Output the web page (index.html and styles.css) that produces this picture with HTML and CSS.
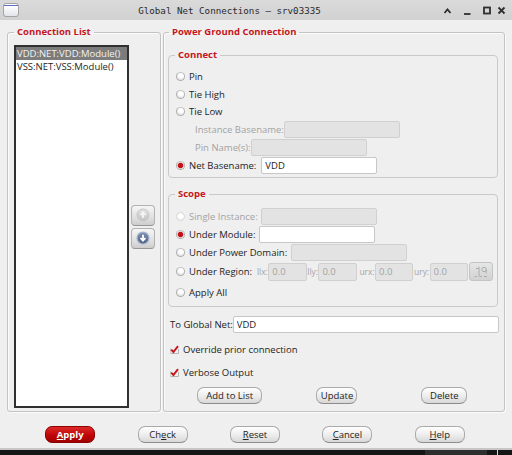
FILE: index.html
```html
<!DOCTYPE html>
<html>
<head>
<meta charset="utf-8">
<title>Global Net Connections</title>
<link rel="stylesheet" href="styles.css">
</head>
<body>
<div class="window">
  <header class="titlebar">
    <span class="winicon"></span>
    <span class="title">Global Net Connections – srv03335</span>
    <svg class="wm" width="70" height="20" viewBox="0 0 70 20">
      <path d="M4.5 13 L7.5 9.5 L10.5 13" fill="none" stroke="#2e2e2e" stroke-width="1.8"/>
      <path d="M24 14 H30.5" stroke="#2e2e2e" stroke-width="1.8"/>
      <rect x="44" y="7.5" width="6" height="6" fill="none" stroke="#2e2e2e" stroke-width="1.8"/>
      <path d="M58.5 7.5 L64.5 13.5 M64.5 7.5 L58.5 13.5" stroke="#2e2e2e" stroke-width="1.8"/>
    </svg>
  </header>

  <main class="content">
    <fieldset class="group left">
      <legend>Connection List</legend>
      <div class="leftbody">
        <ul class="listbox">
          <li class="sel">VDD:NET:VDD:Module()</li>
          <li>VSS:NET:VSS:Module()</li>
        </ul>
        <div class="arrows">
          <button class="arrow" type="button">
            <svg width="14" height="14" viewBox="0 0 14 14">
              <defs><linearGradient id="gu" x1="0" y1="0" x2="0" y2="1"><stop offset="0" stop-color="#e4e4e4"/><stop offset="1" stop-color="#c2c2c2"/></linearGradient></defs>
              <circle cx="7" cy="7" r="6" fill="url(#gu)" stroke="#c6c6c6"/>
              <path d="M7 10 V4.5 M4.5 7 L7 4.3 L9.5 7" fill="none" stroke="#f6f6f6" stroke-width="1.8"/>
            </svg>
          </button>
          <button class="arrow" type="button">
            <svg width="14" height="14" viewBox="0 0 14 14">
              <defs><linearGradient id="gd" x1="0" y1="0" x2="0" y2="1"><stop offset="0" stop-color="#8294b4"/><stop offset="1" stop-color="#4c5f82"/></linearGradient></defs>
              <circle cx="7" cy="7" r="6" fill="url(#gd)" stroke="#a9b6cc" stroke-width="1.2"/>
              <path d="M7 3.8 V9.3 M4.5 7 L7 9.7 L9.5 7" fill="none" stroke="#ffffff" stroke-width="1.8"/>
            </svg>
          </button>
        </div>
      </div>
    </fieldset>

    <fieldset class="group right">
      <legend>Power Ground Connection</legend>

      <fieldset class="sub connect">
        <legend>Connect</legend>
        <div class="row h18"><span class="radio"></span><span>Pin</span></div>
        <div class="row h18"><span class="radio"></span><span>Tie High</span></div>
        <div class="row h17"><span class="radio"></span><span>Tie Low</span></div>
        <div class="row h18 indent"><span class="dis">Instance Basename:</span><input class="field off" disabled value=""></div>
        <div class="row h18 indent"><span class="dis">Pin Name(s):</span><input class="field off" disabled value=""></div>
        <div class="row h19"><span class="radio on"></span><span class="lbl-net">Net Basename:</span><input class="field" value="VDD"></div>
      </fieldset>

      <fieldset class="sub scope">
        <legend>Scope</legend>
        <div class="row h18"><span class="radio off"></span><span class="dis lbl-single">Single Instance:</span><input class="field off" disabled value=""></div>
        <div class="row h18"><span class="radio on"></span><span class="lbl-mod">Under Module:</span><input class="field" value=""></div>
        <div class="row h18"><span class="radio"></span><span class="lbl-pd">Under Power Domain:</span><input class="field off" disabled value=""></div>
        <div class="row h21 region">
          <span class="radio"></span><span class="lbl-region">Under Region:</span>
          <span class="dis coord">llx:</span><input class="field off small" disabled value="0.0">
          <span class="dis coord">lly:</span><input class="field off small" disabled value="0.0">
          <span class="dis coord gap2">urx:</span><input class="field off small s38" disabled value="0.0">
          <span class="dis coord gap1">ury:</span><input class="field off small s38" disabled value="0.0">
          <button class="pick" type="button" disabled>
            <svg width="16" height="14" viewBox="0 0 16 14">
              <path d="M6 1.5 V11.5 M3 3.5 H6 M1.5 11.5 H4 M6.5 11.5 H9 M11 11.5 H14" fill="none" stroke="#a9b0b4" stroke-width="1"/>
              <circle cx="11" cy="4.5" r="2.2" fill="none" stroke="#a9b0b4" stroke-width="1"/>
              <path d="M13.2 4.5 V8.5" stroke="#a9b0b4" stroke-width="1"/>
            </svg>
          </button>
        </div>
        <div class="row h21"><span class="radio"></span><span>Apply All</span></div>
      </fieldset>

      <div class="row h17 globalnet"><span>To Global Net:</span><input class="field wide" value="VDD"></div>

      <div class="row h18 check first">
        <svg class="cb" width="9" height="9" viewBox="0 0 9 9">
          <path d="M0.5 8.5 H8.5 V4" fill="none" stroke="#b4b4b4"/>
          <path d="M0.5 8.5 V3" fill="none" stroke="#cfcfcf"/>
          <path d="M1.2 4.6 L3.4 7 L8 1.2" fill="none" stroke="#c8141a" stroke-width="1.9"/>
        </svg>
        <span>Override prior connection</span>
      </div>
      <div class="row h18 check second">
        <svg class="cb" width="9" height="9" viewBox="0 0 9 9">
          <path d="M0.5 8.5 H8.5 V4" fill="none" stroke="#b4b4b4"/>
          <path d="M0.5 8.5 V3" fill="none" stroke="#cfcfcf"/>
          <path d="M1.2 4.6 L3.4 7 L8 1.2" fill="none" stroke="#c8141a" stroke-width="1.9"/>
        </svg>
        <span>Verbose Output</span>
      </div>

      <div class="listbtns">
        <button class="btn w65" type="button">Add to List</button>
        <button class="btn w41" type="button">Update</button>
        <button class="btn w46" type="button">Delete</button>
      </div>
    </fieldset>
  </main>

  <footer class="actions">
    <button class="btn w50 apply" type="button"><u>A</u>pply</button>
    <button class="btn w50" type="button">Ch<u>e</u>ck</button>
    <button class="btn w50" type="button"><u>R</u>eset</button>
    <button class="btn w50" type="button"><u>C</u>ancel</button>
    <button class="btn w50" type="button"><u>H</u>elp</button>
  </footer>

  <div class="desk"><span class="seg"></span><span class="tick"></span></div>
</div>
</body>
</html>
```

FILE: styles.css
```css
* { box-sizing: border-box; }

html, body {
  margin: 0;
  padding: 0;
}

body {
  width: 512px;
  height: 455px;
  overflow: hidden;
  background: #efefef;
  font-family: "Open Sans", "Noto Sans", sans-serif;
  font-size: 9.5px;
  color: #232323;
}

.window {
  display: flex;
  flex-direction: column;
  height: 455px;
}

/* title bar */
.titlebar {
  flex: none;
  height: 20px;
  display: flex;
  align-items: center;
  background: linear-gradient(#dadada, #d1d1d1);
}

.winicon {
  flex: none;
  width: 16px;
  height: 14px;
  margin-left: 3px;
  margin-top: -1px;
  border: 1px solid #a3a3a3;
  border-radius: 3px;
  background: linear-gradient(#ffffff 0 1px, #5e6ec4 1px 2px, #ffffff 2px, #e3e4ea);
}

.title {
  flex: 1;
  text-align: center;
  font-family: "DejaVu Sans Mono", monospace;
  font-size: 9.2px;
  color: #2a2a2a;
  white-space: nowrap;
}

.wm {
  flex: none;
  margin-right: 2px;
}

/* main area */
.content {
  flex: none;
  display: flex;
  align-items: stretch;
  padding-top: 5px;
}

fieldset {
  margin: 0;
  min-width: 0;
}

legend {
  padding: 0 3px;
  font-size: 9.5px;
  line-height: 14px;
  font-weight: bold;
  color: #c4161c;
}

.group {
  border: 1px solid #c3c3c3;
  border-radius: 3px;
  box-shadow: 1px 1px 0 #fbfbfb, inset 1px 1px 0 #fbfbfb;
}

.group.left {
  width: 154px;
  margin-left: 7px;
  padding: 6px 5px 3px 6px;
}

.group.right {
  width: 342px;
  margin-left: 2px;
  padding: 9px 6px 7px 4px;
}

.group.right > legend {
  margin-left: 1px;
}

.leftbody {
  display: flex;
  align-items: center;
  gap: 2px;
}

.listbox {
  list-style: none;
  margin: 0;
  padding: 0;
  width: 115px;
  height: 363px;
  flex: none;
  background: #ffffff;
  border: 2px solid #303030;
}

.listbox li {
  height: 13px;
  line-height: 13px;
  padding-left: 1px;
  white-space: nowrap;
  color: #1e1e1e;
}

.listbox li.sel {
  background: #7c7c7c;
  color: #f2f2f2;
}

.arrows {
  display: flex;
  flex-direction: column;
  gap: 2px;
}

.arrow {
  width: 24px;
  height: 21px;
  padding: 0;
  margin: 0;
  display: flex;
  align-items: center;
  justify-content: center;
  border: 1px solid #b2b2b2;
  border-bottom-color: #979797;
  border-radius: 4px;
  background: linear-gradient(#f6f6f6, #dcdcdc 70%, #cdcdcd);
}

/* sub groups */
.sub {
  border: 1px solid #c9c9c9;
  border-radius: 4px;
  padding: 5px 4px 2px 7px;
}

.sub > legend {
  margin-left: -1px;
}

.scope {
  margin-top: 9px;
  padding-top: 6px;
  padding-bottom: 3px;
}

.row {
  display: flex;
  align-items: center;
  white-space: nowrap;
}

.h17 { height: 17px; }
.h18 { height: 18px; }
.h19 { height: 19px; }
.h21 { height: 21px; }

.indent {
  padding-left: 19px;
}

.dis {
  color: #a3a3a3;
}

.radio {
  flex: none;
  width: 9px;
  height: 9px;
  margin-right: 4px;
  border-radius: 50%;
  border: 1px solid #b0b0b0;
  border-top-color: #c4c4c4;
  background: radial-gradient(circle at 60% 30%, #ffffff 0 35%, #e2e2e2 75%, #cdcdcd);
}

.radio.on {
  background: radial-gradient(circle at 50% 50%, #c3121a 0 2.3px, #e8a0a0 2.8px, #f6f6f6 3.4px, #e0e0e0);
}

.radio.off {
  border-color: #d6d6d6;
  background: radial-gradient(circle at 60% 30%, #ffffff 0 40%, #ececec);
}

.field {
  flex: none;
  width: 116px;
  height: 17px;
  margin: 0;
  padding: 0 3px;
  font-family: inherit;
  font-size: 9.5px;
  color: #232323;
  background: #ffffff;
  border: 1px solid #c7c7c7;
  border-radius: 2px;
  outline: none;
}

.field.off {
  background: #e3e3e3;
  border-color: #d0d0d0;
  color: #a3a3a3;
  -webkit-text-fill-color: #a3a3a3;
  opacity: 1;
}

.lbl-net { margin-right: 5px; }
.lbl-single { margin-right: 3px; }
.lbl-mod { margin-right: 4px; }
.lbl-pd { margin-right: 4px; }

.field.small {
  width: 39px;
  height: 18px;
}

.field.small.s38 {
  width: 38px;
}

.lbl-region {
  width: 68px;
  flex: none;
}

.coord {
  flex: none;
  font-size: 8.4px;
  padding-right: 0.5px;
}

.coord.gap2 { margin-left: 2px; }
.coord.gap1 { margin-left: 1px; }

.pick {
  flex: none;
  width: 24px;
  height: 19px;
  margin: 0 0 0 1px;
  padding: 0;
  display: flex;
  align-items: center;
  justify-content: center;
  border: 1px solid #c4c4c4;
  border-radius: 3px;
  background: linear-gradient(#e6e6e6, #d2d2d2);
}

.globalnet {
  margin-top: 9px;
  padding-left: 2px;
}

.field.wide {
  flex: 1;
  width: auto;
  margin-right: -1px;
}

.check {
  padding-left: 2px;
}

.check.first { margin-top: 7px; }
.check.second { margin-top: 5px; }

.cb {
  flex: none;
  margin-right: 4px;
}

.listbtns {
  margin-top: 6px;
  display: grid;
  grid-template-columns: repeat(3, 1fr);
  justify-items: center;
  padding-left: 8px;
}

.btn {
  height: 17px;
  margin: 0;
  padding: 0;
  font-family: inherit;
  font-size: 9.5px;
  color: #232323;
  border: 1px solid #aaaaaa;
  border-bottom-color: #8d8d8d;
  border-radius: 7px;
  background: linear-gradient(#ffffff, #ececec 55%, #d8d8d8);
  white-space: nowrap;
}

.btn u {
  text-underline-offset: 1px;
}

.w41 { width: 41px; }
.w46 { width: 46px; }
.w50 { width: 50px; }
.w65 { width: 65px; }

.btn.apply {
  color: #ffffff;
  font-weight: bold;
  border-color: #8c0000;
  background: linear-gradient(#dc2a2a, #c00606 55%, #a00000);
}

/* footer */
.actions {
  flex: none;
  height: 36px;
  display: grid;
  grid-template-columns: repeat(5, 1fr);
  justify-items: center;
  align-items: start;
  padding: 14px 26px 0 24px;
}

.desk {
  flex: 1;
  display: flex;
  border-top: 2px solid #c6c6c6;
  background: #161616;
}

.seg {
  width: 62px;
  margin-left: 425px;
  background: #2e2e2e;
}

.tick {
  width: 1px;
  margin-left: 10px;
  background: #d8d8d8;
}
```
